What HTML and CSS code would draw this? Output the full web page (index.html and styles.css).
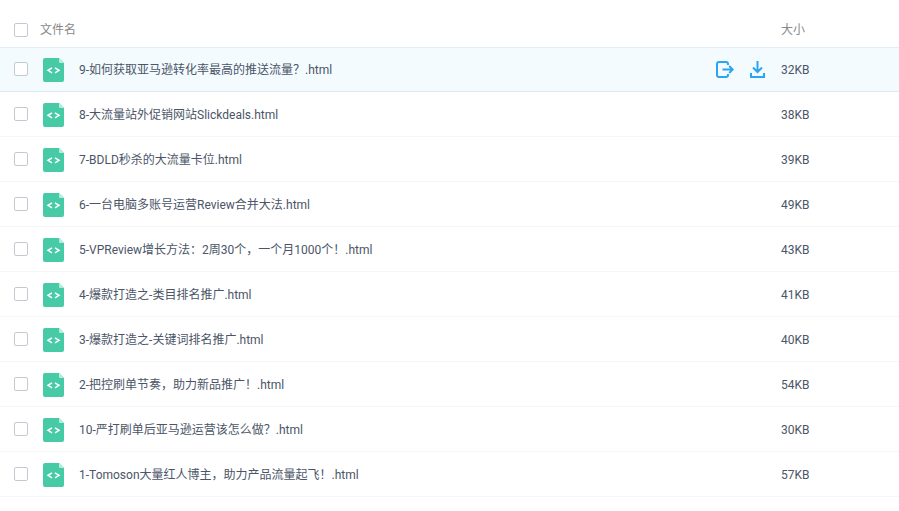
FILE: index.html
```html
<!DOCTYPE html>
<html lang="zh-CN">
<head>
  <meta charset="UTF-8">
  <title>文件列表</title>
  <link rel="stylesheet" href="styles.css">
</head>
<body>
  <svg class="defs" width="0" height="0">
    <symbol id="file-icon" viewBox="0 0 21 24">
      <path d="M2 0H16L21 5V22a2 2 0 0 1-2 2H2a2 2 0 0 1-2-2V2a2 2 0 0 1 2-2Z" fill="#46cba6"/>
      <path d="M16 0L21 5H17a1 1 0 0 1-1-1Z" fill="#b5eeda"/>
      <path d="M9 9.800L5 12.300L9 14.800M12 9.800L16 12.300L12 14.800" fill="none" stroke="#fff" stroke-width="1.5"/>
    </symbol>
  </svg>

  <div class="file-list">
    <div class="row head">
      <span class="check"></span>
      <span class="name">文件名</span>
      <span class="size">大小</span>
    </div>

    <div class="row active">
      <span class="check"></span>
      <svg class="file-icon"><use href="#file-icon"/></svg>
      <span class="name">9-如何获取亚马逊转化率最高的推送流量？.html</span>
      <div class="actions">
        <svg width="18" height="17" viewBox="0 0 18 17" fill="none" stroke="#2aa4f4" stroke-width="2">
          <path d="M12 4V3a2 2 0 0 0-2-2H3a2 2 0 0 0-2 2V14a2 2 0 0 0 2 2H10a2 2 0 0 0 2-2V13"/>
          <path d="M6.500 8.500H16.500M13.200 5L16.700 8.500L13.200 12"/>
        </svg>
        <svg width="15" height="17" viewBox="0 0 15 17" fill="none" stroke="#2aa4f4" stroke-width="2">
          <path d="M7.500 0V10.500M3 6.500L7.500 11L12 6.500"/>
          <path d="M1 12V16H14V12"/>
        </svg>
      </div>
      <span class="size">32KB</span>
    </div>

    <div class="row">
      <span class="check"></span>
      <svg class="file-icon"><use href="#file-icon"/></svg>
      <span class="name">8-大流量站外促销网站Slickdeals.html</span>
      <span class="size">38KB</span>
    </div>
    <div class="row">
      <span class="check"></span>
      <svg class="file-icon"><use href="#file-icon"/></svg>
      <span class="name">7-BDLD秒杀的大流量卡位.html</span>
      <span class="size">39KB</span>
    </div>
    <div class="row">
      <span class="check"></span>
      <svg class="file-icon"><use href="#file-icon"/></svg>
      <span class="name">6-一台电脑多账号运营Review合并大法.html</span>
      <span class="size">49KB</span>
    </div>
    <div class="row">
      <span class="check"></span>
      <svg class="file-icon"><use href="#file-icon"/></svg>
      <span class="name">5-VPReview增长方法：2周30个，一个月1000个！.html</span>
      <span class="size">43KB</span>
    </div>
    <div class="row">
      <span class="check"></span>
      <svg class="file-icon"><use href="#file-icon"/></svg>
      <span class="name">4-爆款打造之-类目排名推广.html</span>
      <span class="size">41KB</span>
    </div>
    <div class="row">
      <span class="check"></span>
      <svg class="file-icon"><use href="#file-icon"/></svg>
      <span class="name">3-爆款打造之-关键词排名推广.html</span>
      <span class="size">40KB</span>
    </div>
    <div class="row">
      <span class="check"></span>
      <svg class="file-icon"><use href="#file-icon"/></svg>
      <span class="name">2-把控刷单节奏，助力新品推广！.html</span>
      <span class="size">54KB</span>
    </div>
    <div class="row">
      <span class="check"></span>
      <svg class="file-icon"><use href="#file-icon"/></svg>
      <span class="name">10-严打刷单后亚马逊运营该怎么做？.html</span>
      <span class="size">30KB</span>
    </div>
    <div class="row">
      <span class="check"></span>
      <svg class="file-icon"><use href="#file-icon"/></svg>
      <span class="name">1-Tomoson大量红人博主，助力产品流量起飞！.html</span>
      <span class="size">57KB</span>
    </div>
  </div>
</body>
</html>
```

FILE: styles.css
```css
html, body {
  height: 100%;
}

body {
  margin: 0;
  overflow: hidden;
  background-color: #fff;
  font-family: Roboto, "Noto Sans CJK SC", sans-serif;
  font-size: 12px;
  color: #4b5567;
}

.defs {
  display: block;
}

.row {
  display: flex;
  align-items: center;
  box-sizing: border-box;
  height: 45px;
  padding-top: 1px;
  padding-left: 14px;
  border-bottom: 1px solid #f5f6f7;
}

.row.head {
  height: 47px;
  padding-top: 12px;
  border-bottom: none;
  color: #888;
}

.row.active {
  padding-top: 0;
  background-color: #f4fbff;
  border-top: 1px solid #e3eef7;
  border-bottom-color: #daeaf4;
}

.check {
  flex: none;
  box-sizing: border-box;
  width: 14px;
  height: 14px;
  margin-bottom: 1px;
  border: 1px solid #c5c9d2;
  border-radius: 2px;
  background-color: #fff;
}

.head .check {
  margin-bottom: 0;
}

.file-icon {
  flex: none;
  width: 21px;
  height: 24px;
  margin-left: 15px;
}

.name {
  flex: 1;
  margin-left: 15px;
  padding-bottom: 2px;
  white-space: nowrap;
}

.head .name {
  margin-left: 12px;
}

.actions {
  display: flex;
  align-items: center;
  gap: 16px;
  margin-right: 16px;
}

.size {
  flex: none;
  width: 118px;
}

.head .size {
  padding-bottom: 2px;
}
```
